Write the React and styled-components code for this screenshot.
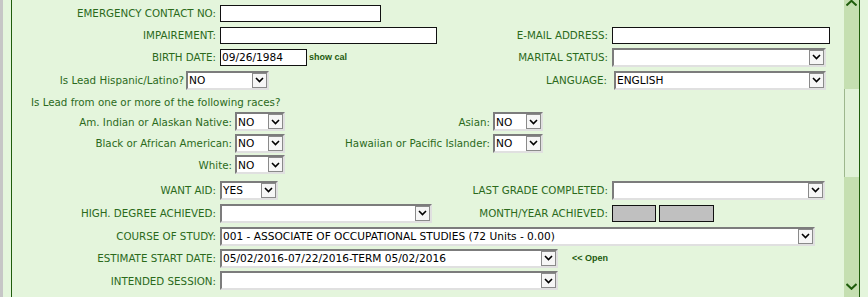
import React from 'react';
import styled, { createGlobalStyle } from 'styled-components';

const Global = createGlobalStyle`
  html, body { margin: 0; padding: 0; }
  body { background: #e4f5dc; overflow: hidden; }
`;

const Page = styled.div`
  display: flex;
  height: 297px;
  width: 868px;
  box-sizing: border-box;
  border-left: 3px solid #c6c6c6;
  padding-left: 8px;
  background: #e4f5dc;
  overflow: hidden;
`;

const Panel = styled.div`
  display: flex;
  width: 849px;
  height: 297px;
  box-sizing: border-box;
  border-left: 1px solid #1f5d0c;
  border-right: 1px solid #1f5d0c;
`;

const Form = styled.div`
  flex: 1;
  display: flex;
  flex-direction: column;
  padding-top: 2px;
  font-family: "DejaVu Sans", Verdana, sans-serif;
  font-size: 10.3px;
  color: #2b6a1b;
`;

const Row = styled.div`
  display: grid;
  grid-template-columns: ${p => p.cols || '208px 220px 172px 1fr'};
  align-items: center;
  height: ${p => p.h || 22}px;
`;

const Label = styled.div`
  text-align: right;
  padding-right: ${p => p.pr || 4}px;
  white-space: nowrap;
`;

const Cell = styled.div`
  display: flex;
  align-items: center;
  gap: ${p => p.gap || 0}px;
`;

const Title = styled.div`
  height: 19px;
  display: flex;
  align-items: center;
  padding-left: 19px;
`;

const Races = styled.div`
  display: flex;
  flex-direction: column;
  margin-bottom: 4px;
`;

const TextBox = styled.div`
  width: ${p => p.w}px;
  height: 17px;
  box-sizing: border-box;
  border: 1px solid #111;
  background: ${p => (p.grey ? '#c0c0c0' : '#fff')};
  color: #000;
  font-size: 10.6px;
  line-height: 15px;
  padding-left: 1px;
`;

const SelectBox = styled.div`
  width: ${p => p.w}px;
  height: 19px;
  box-sizing: border-box;
  display: flex;
  align-items: center;
  background: #fff;
  border-top: 2px solid #7c7c7c;
  border-left: 2px solid #7c7c7c;
  border-bottom: 2px solid #e0e0e0;
  border-right: 2px solid #e0e0e0;
  color: #000;
  font-size: 10.6px;
`;

const SelectText = styled.span`
  flex: 1;
  padding-left: 1px;
  white-space: nowrap;
  overflow: hidden;
`;

const ArrowBtn = styled.span`
  width: 15px;
  height: 15px;
  box-sizing: border-box;
  border: 1px solid #8a8a8a;
  background: #f6f6f6;
  display: flex;
  align-items: center;
  justify-content: center;
`;

const SmallLink = styled.span`
  font-family: "Liberation Sans", Arial, sans-serif;
  font-weight: bold;
  font-size: 9px;
  color: #1e5a10;
  margin-left: ${p => p.ml || 2}px;
`;

const Scrollbar = styled.div`
  width: 15px;
  background: #c5dfb1;
  position: relative;
`;

const Thumb = styled.div`
  position: absolute;
  left: 0;
  right: 0;
  top: 89px;
  height: 88px;
  background: #e1f2d8;
  border-left: 1px solid #9db78d;
`;

const Chevron = styled.svg`
  position: absolute;
  left: 2px;
  ${p => (p.up ? 'top: 0;' : 'top: 283px;')}
`;

const Select = ({ w, value }) => (
  <SelectBox w={w}>
    <SelectText>{value}</SelectText>
    <ArrowBtn>
      <svg width="9" height="6" viewBox="0 0 9 6">
        <polyline points="1,1 4.5,4.5 8,1" fill="none" stroke="#000" strokeWidth="1.6" />
      </svg>
    </ArrowBtn>
  </SelectBox>
);

export default function App() {
  return (
    <Page>
      <Global />
      <Panel>
        <Form>
          <Row>
            <Label>EMERGENCY CONTACT NO:</Label>
            <Cell><TextBox w={161} /></Cell>
          </Row>
          <Row>
            <Label>IMPAIREMENT:</Label>
            <Cell><TextBox w={217} /></Cell>
            <Label>E-MAIL ADDRESS:</Label>
            <Cell><TextBox w={218} /></Cell>
          </Row>
          <Row>
            <Label>BIRTH DATE:</Label>
            <Cell><TextBox w={87}>09/26/1984</TextBox><SmallLink>show cal</SmallLink></Cell>
            <Label>MARITAL STATUS:</Label>
            <Cell><Select w={214} value="" /></Cell>
          </Row>
          <Row h={24} cols="174px 254px 174px 1fr">
            <Label pr={2}>Is Lead Hispanic/Latino?</Label>
            <Cell><Select w={83} value="NO" /></Cell>
            <Label pr={7}>LANGUAGE:</Label>
            <Cell><Select w={212} value="ENGLISH" /></Cell>
          </Row>
          <Title>Is Lead from one or more of the following races?</Title>
          <Races>
            <Row h={21} cols="223px 65px 193px 1fr">
              <Label pr={3}>Am. Indian or Alaskan Native:</Label>
              <Cell><Select w={50} value="NO" /></Cell>
              <Label pr={3}>Asian:</Label>
              <Cell><Select w={50} value="NO" /></Cell>
            </Row>
            <Row h={22} cols="223px 65px 193px 1fr">
              <Label pr={3}>Black or African American:</Label>
              <Cell><Select w={50} value="NO" /></Cell>
              <Label pr={3}>Hawaiian or Pacific Islander:</Label>
              <Cell><Select w={50} value="NO" /></Cell>
            </Row>
            <Row h={21} cols="223px 65px 193px 1fr">
              <Label pr={3}>White:</Label>
              <Cell><Select w={50} value="NO" /></Cell>
            </Row>
          </Races>
          <Row>
            <Label>WANT AID:</Label>
            <Cell><Select w={58} value="YES" /></Cell>
            <Label>LAST GRADE COMPLETED:</Label>
            <Cell><Select w={213} value="" /></Cell>
          </Row>
          <Row h={24}>
            <Label>HIGH. DEGREE ACHIEVED:</Label>
            <Cell><Select w={212} value="" /></Cell>
            <Label>MONTH/YEAR ACHIEVED:</Label>
            <Cell gap={3}><TextBox grey w={44} /><TextBox grey w={55} /></Cell>
          </Row>
          <Row cols="208px 1fr">
            <Label>COURSE OF STUDY:</Label>
            <Cell><Select w={595} value="001 - ASSOCIATE OF OCCUPATIONAL STUDIES (72 Units - 0.00)" /></Cell>
          </Row>
          <Row cols="208px 1fr">
            <Label>ESTIMATE START DATE:</Label>
            <Cell><Select w={338} value="05/02/2016-07/22/2016-TERM 05/02/2016" /><SmallLink ml={14}>&lt;&lt; Open</SmallLink></Cell>
          </Row>
          <Row h={23} cols="208px 1fr">
            <Label>INTENDED SESSION:</Label>
            <Cell><Select w={338} value="" /></Cell>
          </Row>
        </Form>
        <Scrollbar>
          <Chevron up width="11" height="6" viewBox="0 0 11 6">
            <polyline points="0.5,5.5 5.5,0.8 10.5,5.5" fill="none" stroke="#1f5d0c" strokeWidth="2" />
          </Chevron>
          <Thumb />
          <Chevron width="11" height="7" viewBox="0 0 11 7">
            <polyline points="0.5,1 5.5,5.8 10.5,1" fill="none" stroke="#1f5d0c" strokeWidth="2" />
          </Chevron>
        </Scrollbar>
      </Panel>
    </Page>
  );
}
